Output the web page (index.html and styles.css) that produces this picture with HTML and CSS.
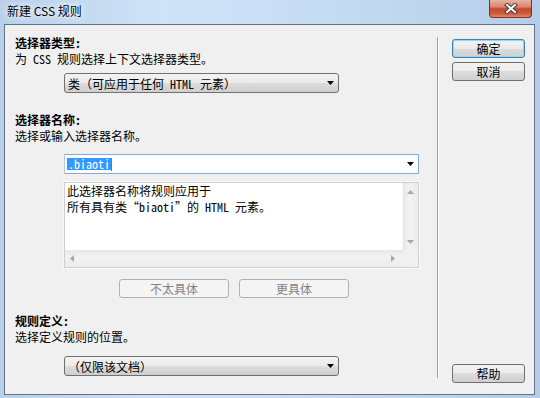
FILE: index.html
```html
<!DOCTYPE html>
<html lang="zh-CN">
<head>
  <meta charset="UTF-8" />
  <title>新建 CSS 规则</title>
  <link rel="stylesheet" href="styles.css">
</head>
<body>
  <div class="window">
    <div class="titlebar">
      <span class="title">新建 CSS 规则</span>
      <span class="close">
        <svg width="14" height="11" viewBox="0 0 14 11">
          <path d="M3 2 L11 9 M11 2 L3 9" stroke="#3a3a3a" stroke-width="4" stroke-linecap="square"/>
          <path d="M3 2 L11 9 M11 2 L3 9" stroke="#fff" stroke-width="2" stroke-linecap="square"/>
        </svg>
      </span>
    </div>

    <div class="client">
      <div class="main">
        <div class="label">选择器类型:</div>
        <div class="hint">为 CSS 规则选择上下文选择器类型。</div>
        <div class="select">
          <span>类（可应用于任何 HTML 元素）</span>
          <svg class="arrow" width="7" height="4" viewBox="0 0 7 4"><path d="M0 0 H7 L3.5 4 Z" fill="#000"/></svg>
        </div>

        <div class="label gap-top">选择器名称:</div>
        <div class="hint">选择或输入选择器名称。</div>
        <div class="combo">
          <span class="selected">.biaoti</span><span class="caret"></span>
          <svg class="arrow" width="7" height="4" viewBox="0 0 7 4"><path d="M0 0 H7 L3.5 4 Z" fill="#000"/></svg>
        </div>
        <div class="memo">
          <div class="memo-text">
            <div>此选择器名称将规则应用于</div>
            <div>所有具有类“biaoti”的 HTML 元素。</div>
          </div>
          <div class="vscroll">
            <svg width="7" height="4" viewBox="0 0 7 4"><path d="M0 4 H7 L3.5 0 Z" fill="#a8a8a8"/></svg>
            <svg width="7" height="4" viewBox="0 0 7 4"><path d="M0 0 H7 L3.5 4 Z" fill="#a8a8a8"/></svg>
          </div>
          <div class="hscroll">
            <svg width="4" height="7" viewBox="0 0 4 7"><path d="M4 0 V7 L0 3.5 Z" fill="#a8a8a8"/></svg>
            <svg width="4" height="7" viewBox="0 0 4 7"><path d="M0 0 V7 L4 3.5 Z" fill="#a8a8a8"/></svg>
          </div>
          <div class="corner"></div>
        </div>
        <div class="spec-row">
          <button class="btn wide" disabled>不太具体</button>
          <button class="btn wide" disabled>更具体</button>
        </div>

        <div class="label gap-top2">规则定义:</div>
        <div class="hint">选择定义规则的位置。</div>
        <div class="select low">
          <span>（仅限该文档）</span>
          <svg class="arrow" width="7" height="4" viewBox="0 0 7 4"><path d="M0 0 H7 L3.5 4 Z" fill="#000"/></svg>
        </div>
      </div>

      <div class="sep"></div>

      <div class="side">
        <button class="btn default">确定</button>
        <button class="btn">取消</button>
        <button class="btn help">帮助</button>
      </div>
    </div>
  </div>
</body>
</html>
```

FILE: styles.css
```css
* {
  box-sizing: border-box;
}
body {
  margin: 0;
  width: 540px;
  height: 398px;
  overflow: hidden;
  font-family: "Noto Sans Mono CJK SC", "Noto Sans CJK SC", sans-serif;
  font-size: 12px;
  color: #000;
}
.window {
  height: 398px;
  display: flex;
  flex-direction: column;
  background: linear-gradient(to right, #b8d0ea 0%, #cfe3f8 30%, #c6dcf3 60%, #b5cde8 100%);
}
.titlebar {
  height: 24px;
  display: flex;
  align-items: flex-start;
}
.title {
  padding: 3px 0 0 7px;
  line-height: 16px;
  font-family: "Noto Sans CJK SC", sans-serif;
  text-shadow: 0 0 5px #fff, 0 0 8px #fff;
}
.close {
  margin-left: auto;
  margin-right: 8px;
  width: 43px;
  height: 18px;
  display: flex;
  align-items: center;
  justify-content: center;
  border: 1px solid #7a3326;
  border-top: none;
  border-radius: 0 0 4px 4px;
  background: linear-gradient(#eab2a4 0%, #d98670 40%, #c7482d 52%, #cf5b3c 80%, #e3876a 100%);
}
.client {
  flex: 1;
  margin: 0 5px 3px 4px;
  border: 1px solid #617388;
  background: #f0f0f0;
  display: flex;
}
.main {
  width: 432px;
  padding: 10px 0 0 10px;
}
.label {
  line-height: 16px;
  font-weight: bold;
}
.hint {
  line-height: 16px;
}
.gap-top {
  margin-top: 19px;
}
.gap-top2 {
  margin-top: 15px;
}
.select {
  margin: 6px 0 0 49px;
  width: 275px;
  height: 20px;
  padding: 0 4px 0 3px;
  display: flex;
  align-items: center;
  justify-content: space-between;
  border: 1px solid #707070;
  border-radius: 3px;
  background: linear-gradient(#f3f3f3 0%, #ebebeb 50%, #dddddd 50%, #cfcfcf 100%);
}
.select.low {
  margin-top: 11px;
}
.combo {
  margin: 10px 0 0 49px;
  width: 355px;
  height: 20px;
  padding: 0 4px 0 2px;
  display: flex;
  align-items: center;
  border: 1px solid #86aad6;
  border-left-color: #b5cbe6;
  background: #fff;
}
.selected {
  background: #3399ff;
  color: #fff;
  line-height: 12px;
  padding: 0 1px;
}
.caret {
  width: 1px;
  height: 13px;
  background: #c2602a;
}
.combo .arrow {
  margin-left: auto;
}
.memo {
  margin: 8px 0 0 49px;
  width: 355px;
  height: 86px;
  border: 1px solid #cfcfcf;
  box-shadow: 0 0 0 1px #fafafa;
  display: grid;
  grid-template-columns: 1fr 16px;
  grid-template-rows: 1fr 17px;
}
.memo-text {
  background: #fff;
  padding: 0 0 0 2px;
  line-height: 16px;
}
.vscroll {
  background: linear-gradient(to right, #e6e6e6, #f2f2f2 40%, #ececec);
  border-left: 1px solid #f7f7f7;
  display: flex;
  flex-direction: column;
  justify-content: space-between;
  align-items: center;
  padding: 7px 0 6px;
}
.hscroll {
  background: linear-gradient(#e6e6e6, #f2f2f2 40%, #ececec);
  display: flex;
  justify-content: space-between;
  align-items: center;
  padding: 0 7px 0 5px;
}
.corner {
  background: #f0f0f0;
}
.spec-row {
  margin: 11px 0 0 104px;
  display: flex;
  gap: 10px;
}
.btn {
  height: 19px;
  width: 73px;
  padding: 0;
  font: inherit;
  color: #000;
  line-height: 16px;
  border: 1px solid #707070;
  border-radius: 3px;
  background: linear-gradient(#f2f2f2 0%, #ebebeb 50%, #dddddd 50%, #cfcfcf 100%);
}
.btn.wide {
  width: 110px;
}
.btn:disabled {
  color: #838383;
  border-color: #adb2b5;
  background: #f4f4f4;
}
.btn.default {
  border-color: #3c7fb1;
  box-shadow: inset 0 0 0 1px #8fd6f7;
}
.help {
  margin-top: auto;
}
.sep {
  width: 1px;
  margin: 12px 0 16px;
  background: #a0a0a0;
  box-shadow: 1px 0 0 #fff;
}
.side {
  flex: 1;
  padding: 14px 0 11px 14px;
  display: flex;
  flex-direction: column;
  gap: 4px;
}
```
